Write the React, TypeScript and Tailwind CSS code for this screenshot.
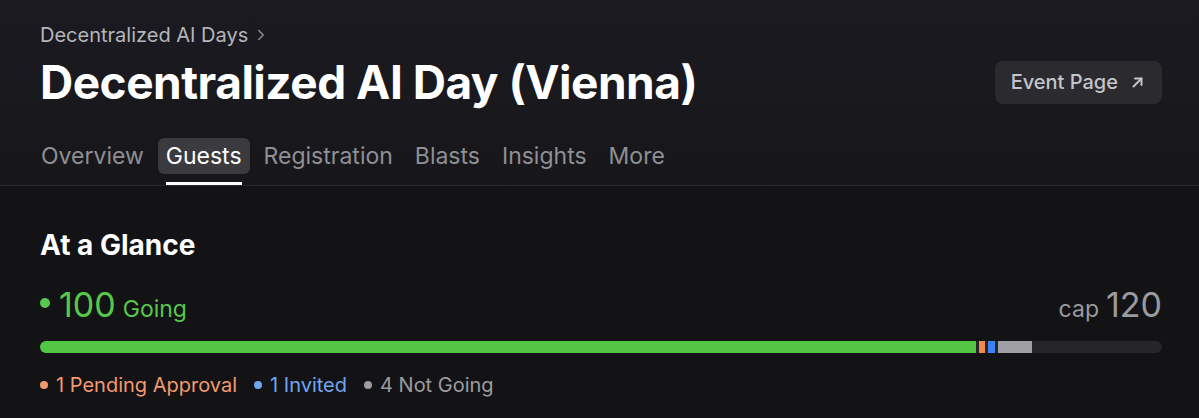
import { ChevronRight } from "lucide-react";

const tabs = ["Overview", "Guests", "Registration", "Blasts", "Insights", "More"];

function App() {
  return (
    <div className="min-h-[418px] w-[1199px] bg-[#131315] font-['Inter',sans-serif] antialiased">
      <div className="bg-gradient-to-b from-[#1b1a21] to-[#17171a] pl-10 pr-[37px] pt-[22px] border-b border-[#29292d]">
        <div className="flex items-center gap-[4px] text-[20px] leading-[26px] text-[#b5b5ba]">
          <span>Decentralized AI Days</span>
          <ChevronRight className="h-[18px] w-[18px] text-[#8a8a90]" strokeWidth={2} />
        </div>
        <div className="mt-[6px] flex items-center justify-between">
          <h1 className="text-[46px] font-bold leading-[56px] tracking-[-0.5px] text-white">
            Decentralized AI Day (Vienna)
          </h1>
          <button className="flex items-center gap-[14px] rounded-lg bg-[#2a2a2f] pl-4 pr-[19px] py-[8px] text-[20px] font-medium leading-[27px] text-[#c4c4ca]">
            Event Page
            <svg width="11" height="11" viewBox="0 0 11 11" fill="none" stroke="currentColor" strokeWidth="2" strokeLinecap="round" strokeLinejoin="round">
              <path d="M1.5 9.5 L9.5 1.5" />
              <path d="M3 1.5 H9.5 V8" />
            </svg>
          </button>
        </div>
        <div className="ml-[-7px] mt-[28px] flex items-start gap-[6px]">
          {tabs.map((t) => {
            const active = t === "Guests";
            return (
              <div key={t} className="flex flex-col">
                <span
                  className={
                    active
                      ? "rounded-md bg-[#3a3a3f] px-2 py-[3px] text-[23px] leading-[30px] text-white"
                      : "px-2 py-[3px] text-[23px] leading-[30px] text-[#8f8f95]"
                  }
                >
                  {t}
                </span>
                <div className={active ? "mx-2 mt-[8px] h-[3px] bg-white" : "mx-2 mt-[8px] h-[3px]"} />
              </div>
            );
          })}
        </div>
      </div>
      <div className="pl-10 pr-[37px] pt-[41px]">
        <h2 className="text-[28px] font-bold leading-[36px] text-white">At a Glance</h2>
        <div className="mt-[22px] flex items-baseline justify-between">
          <div className="flex items-baseline text-[#57c84c]">
            <span className="mr-[9px] inline-block h-[10px] w-[10px] -translate-y-[9px] rounded-full bg-[#57c84c]" />
            <span className="text-[34px] leading-[40px]">100</span>
            <span className="ml-[7px] text-[23px] leading-[28px]">Going</span>
          </div>
          <div className="flex items-baseline text-[#9a9a9f]">
            <span className="text-[23px] leading-[28px]">cap</span>
            <span className="ml-[7px] text-[34px] leading-[40px]">120</span>
          </div>
        </div>
        <div className="mt-[16px] flex h-3 w-full gap-[3px] overflow-hidden rounded-full bg-[#26262a]">
          <div className="h-full w-[936px] bg-[#53c645]" />
          <div className="h-full w-[6px] bg-[#f08a4b]" />
          <div className="h-full w-[7px] bg-[#3b82f6]" />
          <div className="h-full w-[34px] bg-[#a0a0a4]" />
        </div>
        <div className="mt-[18px] flex items-center gap-[17px] text-[20px] leading-[28px]">
          <div className="flex items-center gap-[8px] text-[#f29a6e]">
            <span className="h-[8px] w-[8px] rounded-full bg-[#f29a6e]" />
            <span>1 Pending Approval</span>
          </div>
          <div className="flex items-center gap-[8px] text-[#6ea6f2]">
            <span className="h-[8px] w-[8px] rounded-full bg-[#6ea6f2]" />
            <span>1 Invited</span>
          </div>
          <div className="flex items-center gap-[8px] text-[#9c9ca0]">
            <span className="h-[8px] w-[8px] rounded-full bg-[#9c9ca0]" />
            <span>4 Not Going</span>
          </div>
        </div>
      </div>
    </div>
  );
}

export default App;
